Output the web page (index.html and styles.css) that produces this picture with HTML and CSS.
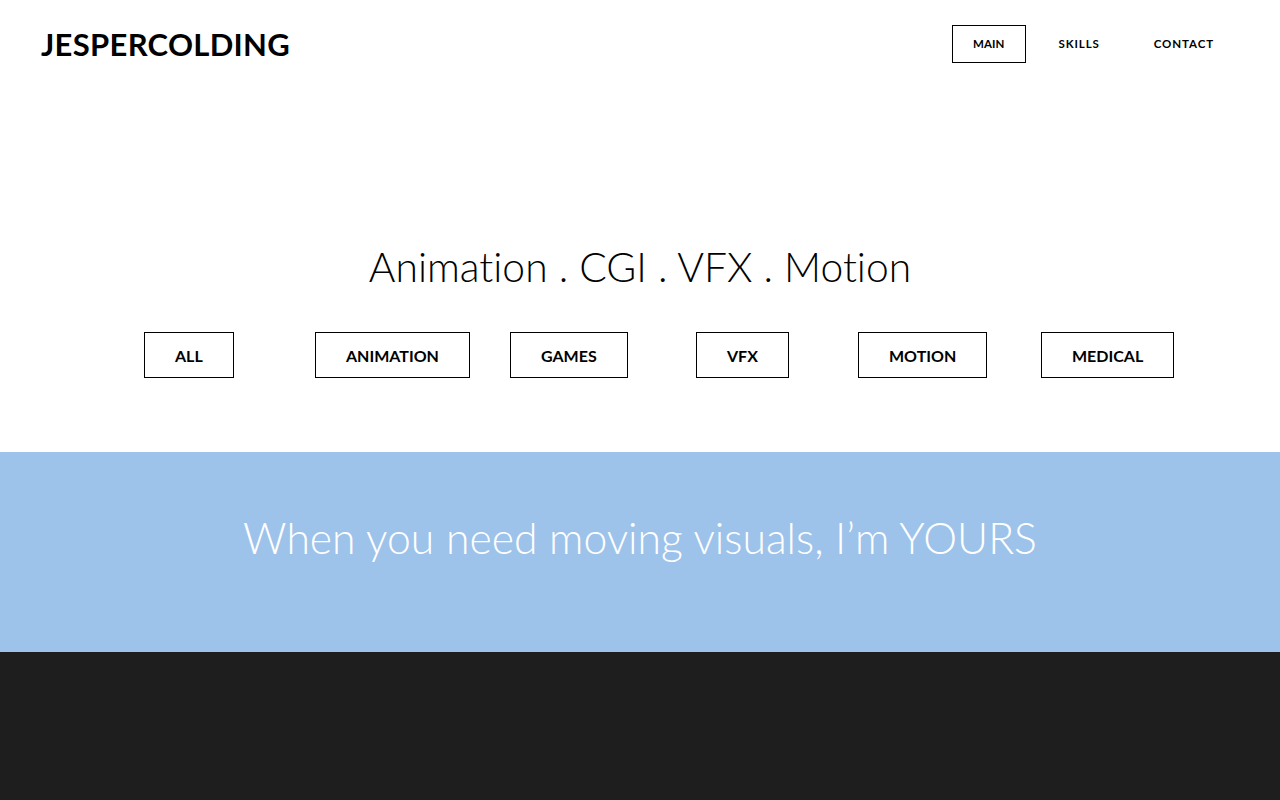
FILE: index.html
```html
<!DOCTYPE html>
<html lang="en">
<head>
<meta charset="utf-8">
<title>Jesper Colding</title>
<link rel="stylesheet" href="styles.css">
</head>
<body>
<header class="site-header">
  <a class="logo" href="#">JESPERCOLDING</a>
  <nav class="nav">
    <a class="nav-link active" href="#">MAIN</a>
    <a class="nav-link" href="#">SKILLS</a>
    <a class="nav-link" href="#">CONTACT</a>
  </nav>
</header>
<main>
  <section class="intro">
    <h1 class="tagline">Animation . CGI . VFX . Motion</h1>
    <div class="filters">
      <button class="filter">ALL</button>
      <button class="filter">ANIMATION</button>
      <button class="filter">GAMES</button>
      <button class="filter">VFX</button>
      <button class="filter">MOTION</button>
      <button class="filter">MEDICAL</button>
    </div>
  </section>
  <section class="banner">
    <h2 class="banner-text">When you need moving visuals, I’m YOURS</h2>
  </section>
  <section class="dark"></section>
</main>
</body>
</html>
```
FILE: styles.css
```css
* { box-sizing: border-box; }
html, body { margin: 0; padding: 0; }
body {
  font-family: "Lato", "Open Sans", sans-serif;
  font-variant-ligatures: none;
  color: #000;
  background: #fff;
}
.site-header {
  display: flex;
  justify-content: space-between;
  align-items: center;
  height: 88px;
  padding: 0 45px 0 41px;
}
.logo {
  font-size: 31px;
  font-weight: 700;
  letter-spacing: 0.3px;
  color: #000;
  text-decoration: none;
}
.nav {
  display: flex;
  align-items: center;
}
.nav-link {
  display: block;
  height: 38px;
  line-height: 36px;
  padding: 0 20px;
  border: 1px solid transparent;
  font-size: 11.5px;
  font-weight: 700;
  letter-spacing: 0.9px;
  color: #000;
  text-decoration: none;
  margin-left: 12px;
}
.nav-link.active {
  border-color: #000;
  letter-spacing: 0.1px;
}
.intro {
  padding-top: 151px;
  height: 364px;
}
.tagline {
  margin: 0;
  text-align: center;
  font-size: 40.8px;
  font-weight: 300;
  line-height: 56px;
}
.filters {
  margin-top: 37px;
  display: grid;
  grid-template-columns: 171px 195px 186px 162px 183px auto;
  justify-items: start;
  padding-left: 144px;
}
.filter {
  height: 46px;
  padding: 0 30px;
  background: #fff;
  border: 1px solid #000;
  font-family: inherit;
  font-size: 16px;
  font-weight: 700;
  letter-spacing: 0;
  color: #000;
}
.banner {
  height: 200px;
  background: #9ec3ea;
  padding-top: 60px;
}
.banner-text {
  margin: 0;
  text-align: center;
  color: #fff;
  font-size: 42.7px;
  font-weight: 300;
  line-height: 52px;
}
.dark {
  height: 148px;
  background: #1e1e1e;
}
```
